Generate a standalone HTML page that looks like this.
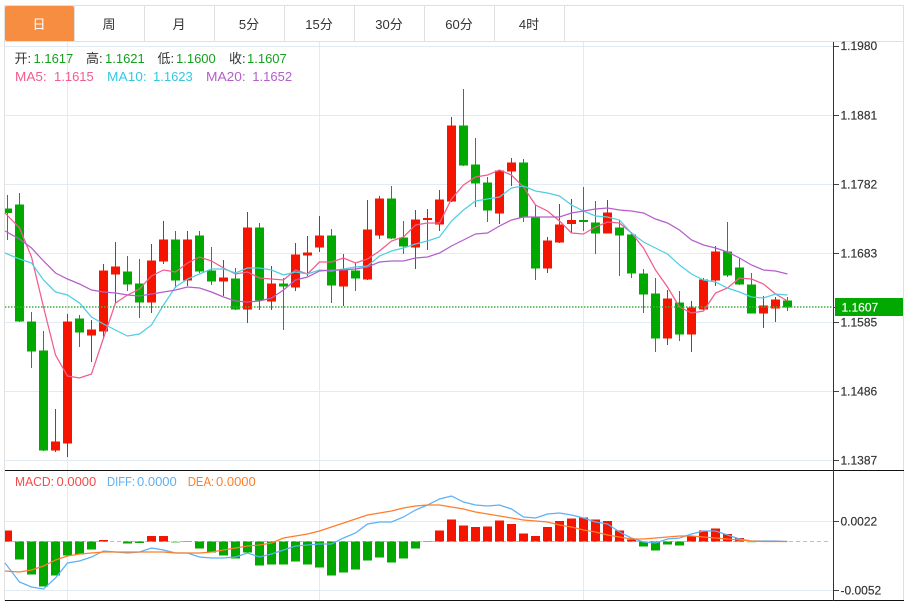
<!DOCTYPE html>
<html><head><meta charset="utf-8"><style>
html,body{margin:0;padding:0;background:#fff;width:912px;height:601px;overflow:hidden}
svg{display:block;position:absolute;left:0;top:0}
text{font-family:"Liberation Sans","Noto Sans CJK SC",sans-serif;font-size:13px;stroke-width:.15}
.a{font-size:12px;fill:#333;stroke:#333}
</style></head><body>
<svg width="912" height="601" viewBox="0 0 912 601" xmlns="http://www.w3.org/2000/svg">
<rect width="912" height="601" fill="#fff"/>
<!-- frame -->
<path d="M4.5 5.5H903.5V601M4.5 5.5V601M5 41.5H904" fill="none" stroke="#e0e0e0"/>
<path d="M74.5 6V41M144.5 6V41M214.5 6V41M284.5 6V41M354.5 6V41M424.5 6V41M494.5 6V41M564.5 6V41" stroke="#e0e0e0"/>
<path d="M5 8a2 2 0 0 1 2-2H72a2 2 0 0 1 2 2V41H7a2 2 0 0 1-2-2z" fill="#f68d41"/>
<g text-anchor="middle" fill="#333">
<text x="39" y="29" fill="#fff">日</text><text x="109" y="29">周</text><text x="179" y="29">月</text><text x="249" y="29">5分</text><text x="319" y="29">15分</text><text x="389" y="29">30分</text><text x="459" y="29">60分</text><text x="529" y="29">4时</text>
</g>
<!-- grid -->
<path d="M5 46.5H833M5 115.5H833M5 184.5H833M5 253.5H833M5 322.5H833M5 391.5H833M5 460.5H833M5 521.5H833M5 590.5H833M67.5 42V600M319.5 42V600M583.5 42V600" stroke="#e3ebf2" fill="none"/>
<!-- green wicks/bodies -->
<path fill="none" stroke="#00a800" d="M7.5 195V240M19.5 193V322M31.5 312V368M43.5 331V451M79.5 315V347M127.5 256V291M139.5 259V318M175.5 231V288M199.5 231V273M211.5 247V285M235.5 268V310M259.5 223V310M283.5 278V330M331.5 229V303M355.5 263V291M391.5 186V239M403.5 221V254M463.5 89V166M475.5 138V207M487.5 177V222M523.5 159V222M535.5 205V280M583.5 187V231M595.5 201V254M619.5 220V276M631.5 232V278M643.5 269V313M655.5 278V352M679.5 291V341M727.5 222V277M739.5 258V285M751.5 273V313M787.5 297V311"/>
<path fill="#00a800" d="M5 208.5h7v4.5h-7zM15 204.5h9v117h-9zM27 321.5h9v30h-9zM39 350.5h9v100h-9zM75 318.5h9v14h-9zM123 271.5h9v13h-9zM135 283.5h9v19h-9zM171 239.5h9v41h-9zM195 235.5h9v36h-9zM207 270.5h9v11h-9zM231 278.5h9v31h-9zM255 227.5h9v73h-9zM279 283.5h9v3h-9zM327 235.5h9v50h-9zM351 270.5h9v8h-9zM387 198.5h9v40h-9zM399 237.5h9v9h-9zM459 125.5h9v40h-9zM471 164.5h9v19h-9zM483 182.5h9v28h-9zM519 162.5h9v55h-9zM531 216.5h9v52h-9zM579 220h9v2h-9zM591 222.5h9v11h-9zM615 227.5h9v8h-9zM627 234.5h9v39h-9zM639 273.5h9v21h-9zM651 293.5h9v45h-9zM675 302.5h9v32h-9zM723 251.5h9v24h-9zM735 267.5h9v17h-9zM747 284.5h9v29h-9zM783 300.5h9v7h-9z"/>
<!-- red wicks/bodies -->
<path fill="none" stroke="#f01400" d="M55.5 409V452M67.5 314V457M91.5 320V362M103.5 264V338M115.5 242V303M151.5 244V313M163.5 221V264M187.5 231V286M223.5 260V296M247.5 212V323M271.5 266V310M295.5 243V291M307.5 236V276M319.5 216V252M343.5 254V306M367.5 200V280M379.5 196V239M415.5 210V269M427.5 209V250M439.5 190V231M451.5 117V202M499.5 170V224M511.5 158V186M547.5 237V273M559.5 204V243M571.5 199V233M607.5 200V233M667.5 290V345M691.5 301V352M703.5 278V310M715.5 246V286M763.5 296V328M775.5 297V322"/>
<path fill="#f51400" d="M51 441.5h9v9h-9zM63 321.5h9v122h-9zM87 329.5h9v6h-9zM99 270.5h9v61h-9zM111 266.5h9v8h-9zM147 260.5h9v42h-9zM159 239.5h9v22h-9zM183 239.5h9v41h-9zM219 277.5h9v4h-9zM243 227.5h9v82h-9zM267 283.5h9v18h-9zM291 254.5h9v33h-9zM303 252.5h9v3h-9zM315 235.5h9v12h-9zM339 269.5h9v17h-9zM363 229.5h9v50h-9zM375 198.5h9v37h-9zM411 219.5h9v28h-9zM423 218h9v2h-9zM435 199.5h9v25h-9zM447 125.5h9v76h-9zM495 170.5h9v43h-9zM507 162.5h9v9h-9zM543 240.5h9v28h-9zM555 224.5h9v18h-9zM567 220h9v4h-9zM603 212.5h9v21h-9zM663 298.5h9v40h-9zM687 307.5h9v27h-9zM699 279.5h9v30h-9zM711 251.5h9v29h-9zM759 305.5h9v8h-9zM771 299.5h9v9h-9z"/>
<!-- MA lines -->
<polyline fill="none" stroke="#f25c8c" stroke-width="1.25" points="5,213 19.5,228 31.5,257 43.5,307 55.5,355 67.5,376 79.5,378 91.5,374 103.5,338 115.5,303 127.5,295 139.5,289 151.5,276 163.5,270 175.5,272 187.5,263 199.5,257 211.5,261 223.5,268 235.5,274 247.5,272 259.5,278 271.5,279 283.5,280 295.5,270 307.5,274 319.5,262 331.5,262 343.5,258 355.5,263 367.5,259 379.5,251 391.5,241 403.5,237 415.5,225 427.5,223 439.5,223 451.5,199 463.5,185 475.5,177 487.5,175 499.5,170 511.5,175 523.5,187 535.5,205 547.5,211 559.5,221 571.5,233 583.5,234 595.5,227 607.5,222 619.5,223 631.5,233 643.5,248 655.5,270 667.5,287 679.5,307 691.5,313 703.5,311 715.5,293 727.5,288 739.5,278 751.5,279 763.5,284 775.5,294 787.5,301"/>
<polyline fill="none" stroke="#4fcfe2" stroke-width="1.25" points="5,253 19.5,259 31.5,263 43.5,280 55.5,292 67.5,295 79.5,303 91.5,317 103.5,324 115.5,330 127.5,336 139.5,334 151.5,325 163.5,305 175.5,287 187.5,279 199.5,274 211.5,269 223.5,269 235.5,273 247.5,268 259.5,268 271.5,270 283.5,275 295.5,272 307.5,274 319.5,270 331.5,271 343.5,269 355.5,267 367.5,266 379.5,256 391.5,251 403.5,248 415.5,244 427.5,241 439.5,237 451.5,221 463.5,210 475.5,201 487.5,199 499.5,197 511.5,188 523.5,186 535.5,191 547.5,193 559.5,196 571.5,205 583.5,211 595.5,216 607.5,217 619.5,220 631.5,233 643.5,242 655.5,248 667.5,254 679.5,265 691.5,274 703.5,280 715.5,282 727.5,288 739.5,292 751.5,297 763.5,298 775.5,294 787.5,295"/>
<polyline fill="none" stroke="#b55ecb" stroke-width="1.25" points="5,231 19.5,239 31.5,248 43.5,261 55.5,273 67.5,279 79.5,284 91.5,290 103.5,292 115.5,293 127.5,295 139.5,296 151.5,294 163.5,292 175.5,290 187.5,287 199.5,288 211.5,292 223.5,297 235.5,301 247.5,302 259.5,301 271.5,298 283.5,290 295.5,280 307.5,277 319.5,271 331.5,270 343.5,270 355.5,269 367.5,267 379.5,262 391.5,261 403.5,261 415.5,258 427.5,257 439.5,253 451.5,246 463.5,240 475.5,234 487.5,233 499.5,226 511.5,220 523.5,217 535.5,217 547.5,217 559.5,217 571.5,213 583.5,211 595.5,209 607.5,208 619.5,210 631.5,211 643.5,213 655.5,219 667.5,223 679.5,230 691.5,240 703.5,245 715.5,248 727.5,252 739.5,258 751.5,265 763.5,270 775.5,271 787.5,274"/>
<!-- current price dotted -->
<path d="M5 307H833" stroke="#3fb03f" stroke-width="1.5" stroke-dasharray="1.5 1.5" fill="none"/>
<!-- MACD zero line -->
<path d="M5 541.5H831" stroke="#8fd0e8" stroke-dasharray="4 3" fill="none"/>
<!-- MACD bars -->
<path fill="#f51400" d="M5 530.5h7v11h-7zM99 540h9v1.5h-9zM147 536h9v5.5h-9zM159 536h9v5.5h-9zM435 530.5h9v11h-9zM447 519.5h9v22h-9zM459 525.5h9v16h-9zM471 527h9v14.500h-9zM483 526.500h9v15h-9zM495 520.500h9v21h-9zM507 524h9v17.500h-9zM519 533.500h9v8h-9zM531 536h9v5.500h-9zM543 527h9v14.500h-9zM555 521h9v20.500h-9zM567 518.500h9v23h-9zM579 517.500h9v24h-9zM591 519.500h9v22h-9zM603 521h9v20.500h-9zM615 530.500h9v11h-9zM627 539.500h9v2h-9zM687 536h9v5.500h-9zM699 530.500h9v11h-9zM711 528.500h9v13h-9zM723 534h9v7.500h-9zM735 538h9v3.500h-9z"/>
<path fill="#00a800" d="M15 541.500h9v18h-9zM27 541.500h9v33h-9zM39 541.500h9v45h-9zM51 541.500h9v34h-9zM63 541.500h9v14h-9zM75 541.500h9v13h-9zM87 541.500h9v8h-9zM123 541.500h9v2h-9zM135 541.500h9v1.500h-9zM195 541.500h9v7h-9zM207 541.500h9v11h-9zM219 541.500h9v14h-9zM231 541.500h9v17h-9zM243 541.500h9v11h-9zM255 541.500h9v24h-9zM267 541.500h9v23h-9zM279 541.500h9v23h-9zM291 541.500h9v20h-9zM303 541.500h9v23h-9zM315 541.500h9v26h-9zM327 541.500h9v34h-9zM339 541.500h9v31h-9zM351 541.500h9v28h-9zM363 541.500h9v19h-9zM375 541.500h9v16h-9zM387 541.500h9v21h-9zM399 541.500h9v17h-9zM411 541.500h9v7h-9zM639 541.500h9v5h-9zM651 541.500h9v9h-9zM663 541.500h9v3h-9zM675 541.500h9v4h-9z"/>
<path fill="#a0dca0" d="M171 541.500h9v1.500h-9zM747 541.500h9v1h-9z"/>
<path fill="#f08a80" d="M183 541h9v1h-9zM423 541h9v1h-9z"/>
<!-- DIFF -->
<polyline fill="none" stroke="#5cb0f5" stroke-width="1.25" points="5,563 19.500,582 31.500,587 43.500,589 55.500,578 67.500,563 79.500,561 91.500,557 103.500,551 115.500,552 127.500,553 139.500,552 151.500,548 163.500,550 175.500,553 187.500,553 199.500,557 211.500,558 223.500,558 235.500,557 247.500,553 259.500,557 271.500,554 283.500,550 295.500,546 307.500,545 319.500,544 331.500,544 343.500,538 355.500,533 367.500,524 379.500,522 391.500,522 403.500,517 415.500,510 427.500,505 439.500,499 451.500,496 463.500,502 475.500,505 487.500,506 499.500,505 511.500,509 523.500,517 535.500,518 547.500,514 559.500,513 571.500,515 583.500,518 595.500,522 607.500,524 619.500,532 631.500,538 643.500,542 655.500,543 667.500,539 679.500,538 691.500,534 703.500,531 715.500,531 727.500,535 739.500,539 751.500,541 763.500,541 775.500,541 787.500,541.500"/>
<!-- DEA -->
<polyline fill="none" stroke="#ff7d2a" stroke-width="1.25" points="5,571 19.500,572 31.500,570 43.500,566 55.500,560 67.500,556 79.500,554 91.500,553 103.500,552 115.500,552 127.500,552 139.500,552 151.500,552 163.500,552 175.500,553 187.500,553 199.500,553 211.500,552 223.500,550 235.500,548 247.500,546 259.500,545 271.500,543 283.500,538 295.500,536 307.500,534 319.500,531 331.500,527 343.500,523 355.500,519 367.500,515 379.500,513 391.500,511 403.500,508 415.500,506 427.500,505 439.500,505 451.500,507 463.500,509 475.500,512 487.500,514 499.500,516 511.500,518 523.500,520 535.500,521 547.500,522 559.500,525 571.500,527 583.500,530 595.500,532 607.500,535 619.500,537 631.500,539 643.500,539 655.500,538 667.500,537 679.500,536 691.500,536 703.500,537 715.500,538 727.500,539 739.500,540 751.500,541 763.500,541.500 775.500,541.500 787.500,541.500"/>
<!-- axes -->
<path d="M5 470.500H904M5 600.500H904" stroke="#111" fill="none"/>
<path d="M833.500 42V601" stroke="#333" fill="none"/>
<path d="M834 46.500h5M834 115.500h5M834 184.500h5M834 253.500h5M834 322.500h5M834 391.500h5M834 460.500h5M834 521.500h5M834 590.500h5" stroke="#444" fill="none"/>
<text class="a" x="840.500" y="50">1.1980</text>
<text class="a" x="840.500" y="119.500">1.1881</text>
<text class="a" x="840.500" y="188.500">1.1782</text>
<text class="a" x="840.500" y="257.500">1.1683</text>
<text class="a" x="840.500" y="326.500">1.1585</text>
<text class="a" x="840.500" y="395.500">1.1486</text>
<text class="a" x="840.500" y="464.500">1.1387</text>
<text class="a" x="840.500" y="525.500">0.0022</text>
<text class="a" x="840.500" y="594.500">-0.0052</text>
<path d="M834 307.500h5" stroke="#444"/>
<rect x="835" y="298" width="68" height="18" fill="#00a800"/>
<text class="a" x="841.500" y="311.500" style="fill:#fff;stroke:#fff">1.1607</text>
<!-- legends -->
<text x="14.500" y="63" fill="#333">开:</text><text x="33.500" y="63" fill="#14a01e">1.1617</text>
<text x="86" y="63" fill="#333">高:</text><text x="105" y="63" fill="#14a01e">1.1621</text>
<text x="157.500" y="63" fill="#333">低:</text><text x="176" y="63" fill="#14a01e">1.1600</text>
<text x="229" y="63" fill="#333">收:</text><text x="247" y="63" fill="#14a01e">1.1607</text>
<text x="15" y="81" fill="#f25c8c" textLength="31.7" lengthAdjust="spacingAndGlyphs">MA5:</text><text x="54" y="81" fill="#f25c8c">1.1615</text>
<text x="107" y="81" fill="#35c8e0" textLength="39.7" lengthAdjust="spacingAndGlyphs">MA10:</text><text x="153" y="81" fill="#35c8e0">1.1623</text>
<text x="206" y="81" fill="#b55ecb" textLength="39.7" lengthAdjust="spacingAndGlyphs">MA20:</text><text x="252.300" y="81" fill="#b55ecb">1.1652</text>
<text x="15" y="486" fill="#f44a4a" textLength="39" lengthAdjust="spacingAndGlyphs">MACD:</text><text x="56.500" y="486" fill="#f44a4a">0.0000</text>
<text x="107" y="486" fill="#5cb0f5" textLength="28" lengthAdjust="spacingAndGlyphs">DIFF:</text><text x="137" y="486" fill="#5cb0f5">0.0000</text>
<text x="187.700" y="486" fill="#ff7d2a" textLength="26.500" lengthAdjust="spacingAndGlyphs">DEA:</text><text x="216" y="486" fill="#ff7d2a">0.0000</text>
</svg>
</body></html>
